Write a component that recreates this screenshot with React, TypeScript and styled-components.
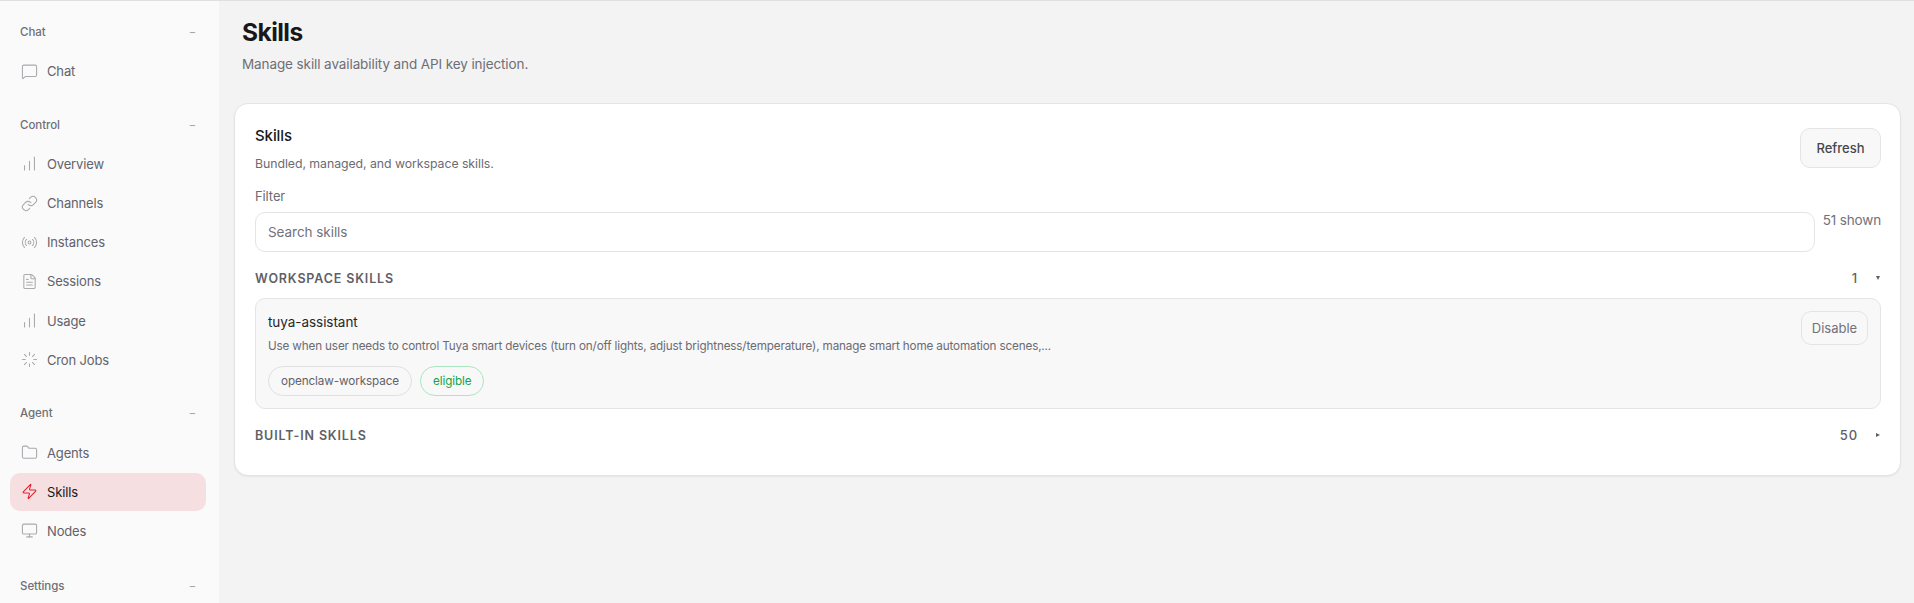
import React from 'react';
import styled, { createGlobalStyle } from 'styled-components';
import {
  MessageSquare,
  ChartNoAxesColumnIncreasing,
  Link,
  Radio,
  FileText,
  Loader,
  Folder,
  Zap,
  Monitor,
} from 'lucide-react';

const GlobalStyle = createGlobalStyle`
  html, body {
    margin: 0;
    height: 100%;
    overflow: hidden;
    background: #f3f3f3;
    font-family: Inter, "Liberation Sans", sans-serif;
    -webkit-font-smoothing: antialiased;
  }
  #root { height: 100%; }
`;

const navGroups = [
  { label: 'Chat', items: [{ name: 'Chat', Icon: MessageSquare }] },
  {
    label: 'Control',
    items: [
      { name: 'Overview', Icon: ChartNoAxesColumnIncreasing },
      { name: 'Channels', Icon: Link },
      { name: 'Instances', Icon: Radio },
      { name: 'Sessions', Icon: FileText },
      { name: 'Usage', Icon: ChartNoAxesColumnIncreasing },
      { name: 'Cron Jobs', Icon: Loader },
    ],
  },
  {
    label: 'Agent',
    items: [
      { name: 'Agents', Icon: Folder },
      { name: 'Skills', Icon: Zap },
      { name: 'Nodes', Icon: Monitor },
    ],
  },
  { label: 'Settings', items: [] },
];

const App = () => (
  <Shell>
    <GlobalStyle />
    <Sidebar>
      {navGroups.map((group) => (
        <NavGroup key={group.label}>
          <GroupHeader>
            <span>{group.label}</span>
            <Collapse>−</Collapse>
          </GroupHeader>
          {group.items.map(({ name, Icon }) => (
            <NavItem key={name} $active={name === 'Skills'}>
              <Icon size={17} strokeWidth={1.5} />
              <span>{name}</span>
            </NavItem>
          ))}
        </NavGroup>
      ))}
    </Sidebar>
    <Main>
      <PageTitle>Skills</PageTitle>
      <PageSub>Manage skill availability and API key injection.</PageSub>
      <Card>
        <CardHead>
          <div>
            <CardTitle>Skills</CardTitle>
            <CardSub>Bundled, managed, and workspace skills.</CardSub>
          </div>
          <RefreshButton>Refresh</RefreshButton>
        </CardHead>
        <FilterLabel>Filter</FilterLabel>
        <FilterRow>
          <SearchInput placeholder="Search skills" />
          <Shown>51 shown</Shown>
        </FilterRow>
        <SectionRow>
          <SectionTitle>Workspace Skills</SectionTitle>
          <SectionCount>1</SectionCount>
          <Caret $open />
        </SectionRow>
        <SkillCard>
          <SkillBody>
            <SkillName>tuya-assistant</SkillName>
            <SkillDesc>
              Use when user needs to control Tuya smart devices (turn on/off lights, adjust
              brightness/temperature), manage smart home automation scenes,...
            </SkillDesc>
            <Chips>
              <Chip>openclaw-workspace</Chip>
              <Chip $ok>eligible</Chip>
            </Chips>
          </SkillBody>
          <DisableButton>Disable</DisableButton>
        </SkillCard>
        <SectionRow $below>
          <SectionTitle>Built-in Skills</SectionTitle>
          <SectionCount>50</SectionCount>
          <Caret />
        </SectionRow>
      </Card>
    </Main>
  </Shell>
);

const Shell = styled.div`
  display: grid;
  grid-template-columns: 219px 1fr;
  height: 603px;
  border-top: 1px solid #e0e0e0;
  box-sizing: border-box;
  overflow: hidden;
`;

const Sidebar = styled.nav`
  background: #fafafa;
  padding: 22px 13px 0 10px;
  overflow: hidden;
`;

const NavGroup = styled.div`
  display: flex;
  flex-direction: column;
  gap: 1.2px;
  margin-bottom: 25.5px;

  &:last-child {
    margin-top: 27.5px;
  }
`;

const GroupHeader = styled.div`
  display: flex;
  justify-content: space-between;
  align-items: center;
  height: 18px;
  padding: 0 10px;
  margin-bottom: 10px;
  font-size: 11.5px;
  font-weight: 500;
  letter-spacing: -0.05px;
  color: #6f6f77;
`;

const Collapse = styled.span`
  color: #a8a8ae;
  font-size: 11px;
`;

const NavItem = styled.div<{ $active?: boolean }>`
  display: flex;
  align-items: center;
  gap: 9.5px;
  height: 38px;
  padding: 0 10px 0 10.5px;
  border-radius: 10px;
  font-size: 13px;
  letter-spacing: -0.15px;
  color: ${(p) => (p.$active ? '#18181b' : '#62626a')};
  background: ${(p) => (p.$active ? '#f5dfe1' : 'transparent')};

  svg {
    flex: none;
    color: ${(p) => (p.$active ? '#e0212f' : '#a9a9ae')};
  }
`;

const Main = styled.main`
  padding: 0 13px 0 15px;
  min-width: 0;
`;

const PageTitle = styled.h1`
  margin: 16px 0 0 8px;
  font-size: 24.5px;
  line-height: 30px;
  font-weight: 700;
  letter-spacing: -0.55px;
  color: #18181b;
`;

const PageSub = styled.p`
  margin: 8px 0 0 8px;
  font-size: 13.5px;
  letter-spacing: -0.1px;
  line-height: 18px;
  color: #6e6e76;
`;

const Card = styled.section`
  margin-top: 29.5px;
  height: 373px;
  box-sizing: border-box;
  padding: 23px 19px 24px 20px;
  background: #fff;
  border: 1px solid #e4e4e4;
  border-radius: 14px;
  box-shadow: 0 1px 2px rgba(0, 0, 0, 0.06);
`;

const CardHead = styled.div`
  display: flex;
  justify-content: space-between;
  align-items: flex-start;
  padding-top: 1px;
`;

const CardTitle = styled.div`
  margin-top: -1px;
  font-size: 15px;
  letter-spacing: -0.1px;
  line-height: 18px;
  font-weight: 500;
  color: #18181b;
`;

const CardSub = styled.div`
  margin-top: 11px;
  font-size: 12.3px;
  letter-spacing: -0.05px;
  line-height: 16px;
  color: #6b6b73;
`;

const RefreshButton = styled.button`
  width: 81px;
  height: 40px;
  background: #f8f8f8;
  border: 1px solid #e4e4e4;
  border-radius: 10px;
  font: 500 13px Inter, sans-serif;
  color: #46464d;
`;

const FilterLabel = styled.div`
  margin-top: 16px;
  font-size: 13px;
  letter-spacing: -0.1px;
  line-height: 16px;
  color: #6b6b73;
`;

const FilterRow = styled.div`
  display: flex;
  gap: 8px;
  margin-top: 8px;
`;

const SearchInput = styled.input`
  flex: 1;
  height: 40px;
  box-sizing: border-box;
  padding: 0 12px;
  background: #fff;
  border: 1px solid #e4e4e4;
  border-radius: 10px;
  font: 400 13.5px Inter, sans-serif;
  letter-spacing: -0.05px;

  &::placeholder {
    color: #72727a;
    opacity: 1;
  }
`;

const Shown = styled.span`
  font-size: 13.5px;
  letter-spacing: -0.15px;
  line-height: 16px;
  color: #71717a;
`;

const SectionRow = styled.div<{ $below?: boolean }>`
  display: flex;
  align-items: center;
  height: 18px;
  margin-top: ${(p) => (p.$below ? '17px' : '17.5px')};
`;

const SectionTitle = styled.span`
  flex: 1;
  font-size: 12.5px;
  font-weight: 600;
  letter-spacing: 0.85px;
  text-transform: uppercase;
  color: #5f5f67;
`;

const SectionCount = styled.span`
  font-size: 13px;
  font-weight: 500;
  letter-spacing: 0.9px;
  color: #5f5f67;
`;

const Caret = styled.span<{ $open?: boolean }>`
  margin: 0 1px 0 18px;
  width: 0;
  height: 0;
  border-left: 4px solid #5f5f67;
  border-top: 2.5px solid transparent;
  border-bottom: 2.5px solid transparent;
  transform: ${(p) => (p.$open ? 'rotate(90deg)' : 'none')};
`;

const SkillCard = styled.div`
  display: flex;
  justify-content: space-between;
  align-items: flex-start;
  height: 111px;
  box-sizing: border-box;
  margin-top: 11px;
  padding: 12px;
  background: #f8f8f8;
  border: 1px solid #e4e4e4;
  border-radius: 10px;
`;

const SkillBody = styled.div`
  min-width: 0;
  padding-top: 2px;
`;

const SkillName = styled.div`
  font-size: 13.5px;
  letter-spacing: -0.05px;
  line-height: 18px;
  color: #27272a;
`;

const SkillDesc = styled.div`
  margin-top: 7px;
  font-size: 11.7px;
  letter-spacing: -0.15px;
  line-height: 16px;
  color: #6b6b73;
`;

const Chips = styled.div`
  display: flex;
  gap: 8px;
  margin-top: 12px;
`;

const Chip = styled.span<{ $ok?: boolean }>`
  display: flex;
  align-items: center;
  height: 30px;
  box-sizing: border-box;
  padding: 0 12px;
  border: 1px solid ${(p) => (p.$ok ? '#a9e6c3' : '#e0e0e0')};
  border-radius: 15px;
  font-size: 11.7px;
  letter-spacing: -0.1px;
  color: ${(p) => (p.$ok ? '#16a34a' : '#62626a')};
`;

const DisableButton = styled.button`
  width: 67px;
  height: 34px;
  background: transparent;
  border: 1px solid #e4e4e4;
  border-radius: 10px;
  font: 400 13px Inter, sans-serif;
  color: #71717a;
`;

export default App;
